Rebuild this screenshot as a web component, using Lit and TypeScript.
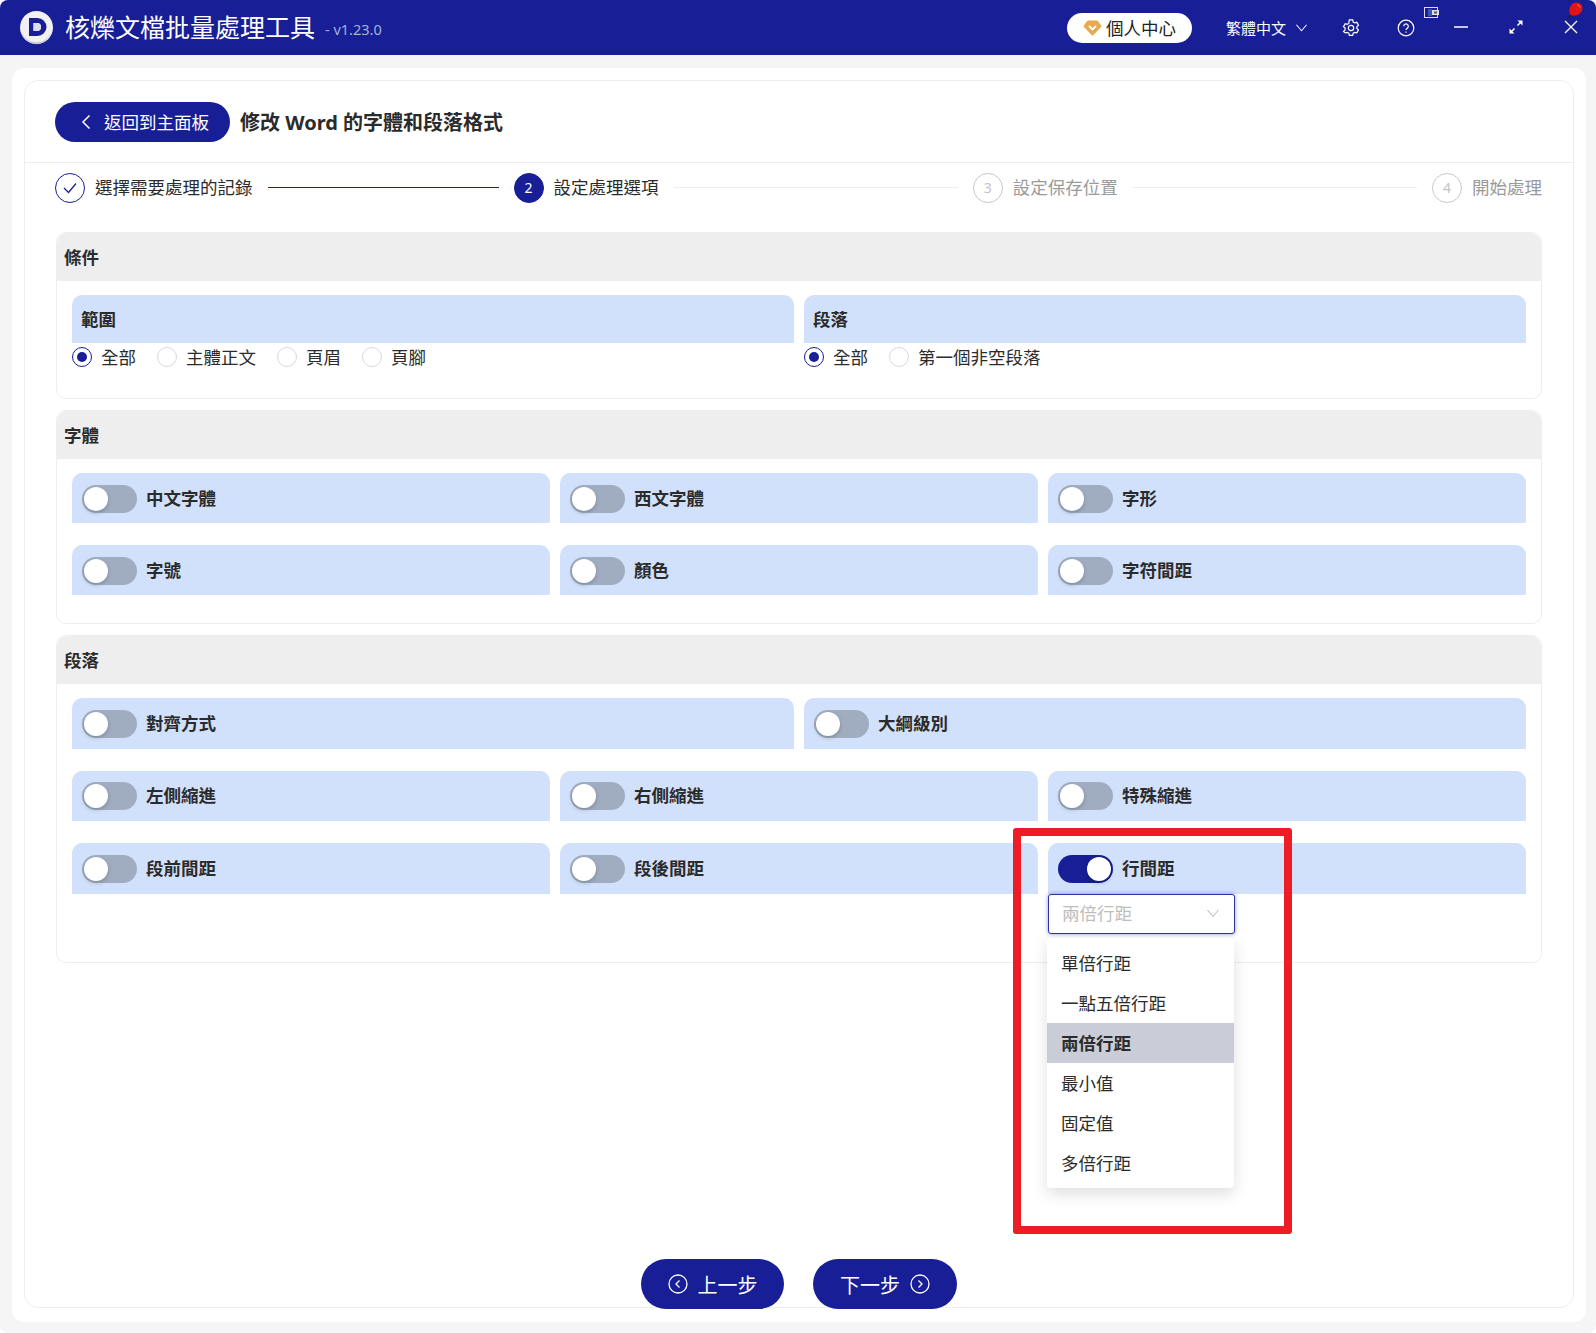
import { LitElement, html, css } from 'lit'
import { customElement } from 'lit/decorators.js'

const chevronDown = (size: number) => html`<svg width=${size} height=${size} viewBox="0 0 14 14" fill="none" stroke="currentColor" stroke-width="1.1"><path d="M1.5 4l5.5 6.5L12.5 4"/></svg>`

@customElement('app-root')
export class AppRoot extends LitElement {
  static styles = css`
    :host {
      display: flex;
      flex-direction: column;
      position: relative;
      height: 1333px;
      background: #f5f5f5;
      border-radius: 8px;
      font-family: "Noto Sans", "Noto Sans CJK TC", sans-serif;
      font-size: 17.5px;
      color: #2b2b2b;
      overflow: hidden;
    }

    /* title bar */
    .titlebar {
      flex: 0 0 55px;
      display: flex;
      align-items: center;
      background: #171e96;
      color: #fff;
      padding-left: 19px;
    }
    .logo { width: 35px; height: 35px; margin-right: 11px; }
    .app-name { font-size: 25px; line-height: 1; }
    .version { font-size: 14.5px; color: #a3b3d6; margin-left: 10px; margin-top: 3px; }
    .spacer { flex: 1; }
    .vip {
      display: flex;
      align-items: center;
      gap: 4px;
      width: 125px;
      height: 30px;
      box-sizing: border-box;
      padding-left: 16px;
      border-radius: 15px;
      background: #fff;
      color: #222;
      font-size: 17.5px;
      margin-right: 34px;
    }
    .lang { display: flex; align-items: center; gap: 9px; font-size: 15px; margin-right: 15px; }
    .tool { width: 55px; display: flex; justify-content: center; }
    .tools { display: flex; margin-right: -2px; }
    .wallet { position: absolute; left: 1424px; top: 7px; }
    .pin { position: absolute; left: 1565px; top: 2px; }

    /* white panel */
    .panel {
      flex: 1;
      display: flex;
      margin: 13px 10px 11px 12px;
      padding: 12px 12px 14px 12px;
      background: #fff;
      border-radius: 12px;
    }
    .card {
      flex: 1;
      display: flex;
      flex-direction: column;
      border: 1px solid #eee;
      border-radius: 14px;
    }
    .top {
      display: flex;
      align-items: center;
      height: 82px;
      padding-left: 30px;
      border-bottom: 1px solid #eee;
      box-sizing: border-box;
      gap: 10px;
    }
    .back {
      display: flex;
      align-items: center;
      gap: 12px;
      box-sizing: border-box;
      width: 175px;
      height: 40px;
      padding-left: 25px;
      border-radius: 20px;
      background: #171e96;
      color: #fff;
      font-size: 17.5px;
    }
    .page-title { font-size: 20px; font-weight: 700; }

    /* steps */
    .steps {
      display: flex;
      align-items: center;
      height: 49px;
      padding: 0 31px 0 30px;
    }
    .num {
      flex: 0 0 30px;
      height: 30px;
      box-sizing: border-box;
      display: flex;
      align-items: center;
      justify-content: center;
      border-radius: 50%;
      border: 1px solid #c8c8c8;
      color: #c4c4c4;
      font-size: 14px;
      margin-right: 10px;
    }
    .num.done { border-color: #171e96; color: #171e96; }
    .num.now { background: #171e96; border-color: #171e96; color: #fff; }
    .step-text { white-space: nowrap; padding-bottom: 2px; }
    .step-text.off { color: #9a9a9a; }
    .line { flex: 1; height: 1px; background: #eee; margin: 0 15px; }
    .line.first { flex: 0 0 231px; background: #171e96; }

    /* sections */
    .sections {
      display: flex;
      flex-direction: column;
      gap: 11px;
      padding: 20px 31px 0;
    }
    .section { border: 1px solid #eee; border-radius: 10px; }
    .section-head {
      height: 48px;
      box-sizing: border-box;
      display: flex;
      align-items: center;
      padding: 0 0 2px 7px;
      background: #eee;
      border-radius: 10px 10px 0 0;
      font-weight: 700;
    }
    .section-body { padding: 14px 15px 28px; }
    .section-body.first { padding-bottom: 31px; }
    .grid { display: grid; gap: 22px 10px; align-items: start; }
    .cols-2 { grid-template-columns: 1fr 1fr; }
    .cols-3 { grid-template-columns: 1fr 1fr 1fr; }
    .stack { display: flex; flex-direction: column; gap: 22px; }
    .group-title {
      height: 48px;
      box-sizing: border-box;
      display: flex;
      align-items: center;
      padding: 0 0 2px 9px;
      background: #d2e1fb;
      border-radius: 10px 10px 0 0;
      font-weight: 700;
    }
    .radios { display: flex; gap: 21px; margin-top: 4px; height: 20px; align-items: center; }
    .radio { display: flex; align-items: center; gap: 9px; }
    .radio span:last-child { padding-bottom: 2px; }
    .dot {
      width: 20px;
      height: 20px;
      box-sizing: border-box;
      border: 1px solid #d9d9d9;
      border-radius: 50%;
      display: flex;
      align-items: center;
      justify-content: center;
    }
    .dot.on { border-color: #171e96; }
    .dot.on::after {
      content: "";
      width: 10px;
      height: 10px;
      border-radius: 50%;
      background: #171e96;
    }
    .opt {
      height: 50px;
      display: flex;
      align-items: center;
      gap: 9px;
      padding-left: 10px;
      background: #d2e1fb;
      border-radius: 10px 10px 0 0;
      font-weight: 700;
    }
    .opt-label { padding-bottom: 2px; }
    .tall .opt { height: 50.5px; }
    .toggle {
      position: relative;
      width: 55px;
      height: 28px;
      margin-top: 1px;
      border-radius: 14px;
      background: #a0acc0;
    }
    .toggle::after {
      content: "";
      position: absolute;
      left: 2px;
      top: 2px;
      width: 24px;
      height: 24px;
      border-radius: 50%;
      background: #fff;
      box-shadow: 0 2px 4px rgba(0, 0, 0, 0.2);
    }
    .toggle.on { background: #171e96; }
    .toggle.on::after { left: 29px; }

    .cell { position: relative; }
    .select {
      display: flex;
      align-items: center;
      justify-content: space-between;
      box-sizing: border-box;
      width: 187px;
      height: 40px;
      padding: 0 14px 2px 13px;
      background: #fff;
      border: 1.5px solid #2d349f;
      border-radius: 3px;
      box-shadow: 0 0 4px rgba(23, 30, 150, 0.45);
      color: #bdbdbd;
    }
    .menu {
      position: absolute;
      left: -1px;
      top: 95px;
      width: 187px;
      padding: 5px 0;
      background: #fff;
      border-radius: 4px;
      box-shadow: 0 6px 16px rgba(0, 0, 0, 0.13);
      z-index: 2;
    }
    .menu-item {
      height: 40px;
      box-sizing: border-box;
      display: flex;
      align-items: center;
      padding: 0 0 2px 14px;
    }
    .menu-item.sel { background: #cacdd8; font-weight: 700; }

    /* footer */
    .footer {
      margin-top: auto;
      margin-bottom: -2px;
      display: flex;
      justify-content: center;
      gap: 29px;
    }
    .nav {
      display: flex;
      align-items: center;
      justify-content: center;
      gap: 10px;
      width: 143px;
      height: 50px;
      border-radius: 25px;
      background: #171e96;
      color: #fff;
      font-size: 20px;
    }
    .nav.next { width: 144px; }

    /* the red mark around the dropdown */
    .mark {
      position: absolute;
      left: 1013px;
      top: 828px;
      width: 279px;
      height: 406px;
      box-sizing: border-box;
      border: 8px solid #ee1c25;
      border-radius: 3px;
      z-index: 3;
    }
  `

  private toggle(label: string, on = false) {
    return html`<div class="opt"><span class="toggle ${on ? 'on' : ''}"></span><span class="opt-label">${label}</span></div>`
  }

  private radio(label: string, on = false) {
    return html`<div class="radio"><span class="dot ${on ? 'on' : ''}"></span><span>${label}</span></div>`
  }

  render() {
    const spacing = ['單倍行距', '一點五倍行距', '兩倍行距', '最小值', '固定值', '多倍行距']
    return html`
      <div class="titlebar">
        <svg class="logo" viewBox="0 0 35 35">
          <circle cx="17.5" cy="17.5" r="16.5" fill="#f1f1f1"/>
          <path d="M3 23a16 16 0 0 0 29 0a15 15 0 0 1-29 0z" fill="#c9c9d6"/>
          <path fill-rule="evenodd" fill="#171e96" d="M10 8h8.500a9 9 0 0 1 0 18H10zM14.500 13v8h3.500a4 4 0 0 0 0-8z"/>
          <path d="M14.500 13h3.500a4 4 0 0 1 0 8h-3.500z" fill="#dcdcf0"/>
        </svg>
        <span class="app-name">核爍文檔批量處理工具</span>
        <span class="version">- v1.23.0</span>
        <span class="spacer"></span>
        <div class="vip">
          <svg width="19" height="16" viewBox="0 0 19 16">
            <path d="M5 1.500h9l3.500 4.500L9.500 14.500 1.500 6z" fill="#e8a951" stroke="#e8a951" stroke-width="2" stroke-linejoin="round"/>
            <path d="M6 6l3.500 3.500L13 6" fill="none" stroke="#fff" stroke-width="1.800"/>
          </svg>
          個人中心
        </div>
        <div class="lang">繁體中文 ${chevronDown(13)}</div>
        <div class="tools">
          <div class="tool">
            <svg width="18" height="18" viewBox="0 0 18 18" fill="none" stroke="#fff" stroke-width="1.2">
              <path d="M7.300 1.200h3.400l.5 2.100 1.500.9 2.100-.6 1.700 2.900-1.600 1.500v1.800l1.600 1.500-1.700 2.900-2.100-.6-1.500.9-.5 2.100H7.300l-.5-2.100-1.500-.9-2.100.6L1.500 12.700l1.600-1.500V9.400L1.500 7.900l1.700-2.900 2.100.6 1.500-.9z" transform="translate(0 -.3)"/>
              <circle cx="9" cy="9" r="2.700"/>
            </svg>
          </div>
          <div class="tool">
            <svg width="18" height="18" viewBox="0 0 18 18" fill="none" stroke="#fff" stroke-width="1.2">
              <circle cx="9" cy="9" r="7.800"/>
              <path d="M6.700 7.200a2.300 2.300 0 1 1 3.500 2c-.8.500-1.200.9-1.200 1.900"/>
              <path d="M9 12.500v1.300"/>
            </svg>
          </div>
          <div class="tool">
            <svg width="16" height="16" viewBox="0 0 16 16" stroke="#fff" stroke-width="1.500"><path d="M1 8h14"/></svg>
          </div>
          <div class="tool">
            <svg width="16" height="16" viewBox="0 0 16 16" fill="#fff" stroke="#fff">
              <path d="M3.500 12.500l3-3M9.500 6.500l3-3" stroke-width="1.500"/>
              <path d="M9.500 1.500h5v5zM1.500 9.500v5h5z" stroke="none"/>
            </svg>
          </div>
          <div class="tool">
            <svg width="16" height="16" viewBox="0 0 16 16" stroke="#fff" stroke-width="1.300"><path d="M2 2l12 12M14 2L2 14"/></svg>
          </div>
        </div>
      </div>
      <svg class="wallet" width="16" height="11" viewBox="0 0 16 11">
        <rect x=".5" y=".5" width="13" height="10" fill="#171e96" stroke="#ddd"/>
        <rect x="4" y="2" width="4" height="7" fill="#3b55b5"/>
        <rect x="8" y="3" width="7" height="5" fill="#ddd"/>
        <rect x="10" y="4.500" width="3" height="2" fill="#555"/>
      </svg>
      <svg class="pin" width="19" height="19" viewBox="0 0 19 19">
        <path d="M6 13l-4 4" stroke="#222" stroke-width="1.500" stroke-dasharray="2 1"/>
        <path d="M11 .5c4 0 7 2.500 6.500 6-.5 3.500-3.500 6.500-7 7C7.500 14 4 13 4.500 10 3.500 7.500 6 .5 11 .5z" fill="#e51414"/>
        <path d="M12 3c2 0 3 1 3 2.500" stroke="#ff7a7a" fill="none"/>
      </svg>

      <div class="panel">
        <div class="card">
          <div class="top">
            <div class="back">
              <svg width="12" height="16" viewBox="0 0 12 16" fill="none" stroke="#fff" stroke-width="1.500"><path d="M9.500 1.500L3 8l6.500 6.500"/></svg>
              返回到主面板
            </div>
            <div class="page-title">修改 Word 的字體和段落格式</div>
          </div>

          <div class="steps">
            <span class="num done">
              <svg width="16" height="14" viewBox="0 0 16 14" fill="none" stroke="#171e96" stroke-width="1.300"><path d="M2 7l4.500 4.500L14 2.500"/></svg>
            </span>
            <span class="step-text">選擇需要處理的記錄</span>
            <span class="line first"></span>
            <span class="num now">2</span>
            <span class="step-text">設定處理選項</span>
            <span class="line"></span>
            <span class="num">3</span>
            <span class="step-text off">設定保存位置</span>
            <span class="line"></span>
            <span class="num">4</span>
            <span class="step-text off">開始處理</span>
          </div>

          <div class="sections">
            <div class="section">
              <div class="section-head">條件</div>
              <div class="section-body first">
                <div class="grid cols-2">
                  <div>
                    <div class="group-title">範圍</div>
                    <div class="radios">
                      ${this.radio('全部', true)}${this.radio('主體正文')}${this.radio('頁眉')}${this.radio('頁腳')}
                    </div>
                  </div>
                  <div>
                    <div class="group-title">段落</div>
                    <div class="radios">
                      ${this.radio('全部', true)}${this.radio('第一個非空段落')}
                    </div>
                  </div>
                </div>
              </div>
            </div>

            <div class="section">
              <div class="section-head">字體</div>
              <div class="section-body">
                <div class="grid cols-3">
                  ${['中文字體', '西文字體', '字形', '字號', '顏色', '字符間距'].map(t => this.toggle(t))}
                </div>
              </div>
            </div>

            <div class="section">
              <div class="section-head">段落</div>
              <div class="section-body tall">
                <div class="stack">
                  <div class="grid cols-2">
                    ${this.toggle('對齊方式')}${this.toggle('大綱級別')}
                  </div>
                  <div class="grid cols-3">
                    ${this.toggle('左側縮進')}${this.toggle('右側縮進')}${this.toggle('特殊縮進')}
                    ${this.toggle('段前間距')}${this.toggle('段後間距')}
                    <div class="cell">
                      ${this.toggle('行間距', true)}
                      <div class="select">兩倍行距 ${chevronDown(14)}</div>
                      <div class="menu">
                        ${spacing.map(s => html`<div class="menu-item ${s === '兩倍行距' ? 'sel' : ''}">${s}</div>`)}
                      </div>
                    </div>
                  </div>
                </div>
              </div>
            </div>
          </div>

          <div class="footer">
            <div class="nav">
              <svg width="20" height="20" viewBox="0 0 20 20" fill="none" stroke="#fff" stroke-width="1.300"><circle cx="10" cy="10" r="9"/><path d="M11.500 6.500L8 10l3.500 3.500"/></svg>
              上一步
            </div>
            <div class="nav next">
              下一步
              <svg width="20" height="20" viewBox="0 0 20 20" fill="none" stroke="#fff" stroke-width="1.300"><circle cx="10" cy="10" r="9"/><path d="M8.500 6.500L12 10l-3.500 3.500"/></svg>
            </div>
          </div>
        </div>
      </div>

      <div class="mark"></div>
    `
  }
}

declare global {
  interface HTMLElementTagNameMap {
    'app-root': AppRoot
  }
}
